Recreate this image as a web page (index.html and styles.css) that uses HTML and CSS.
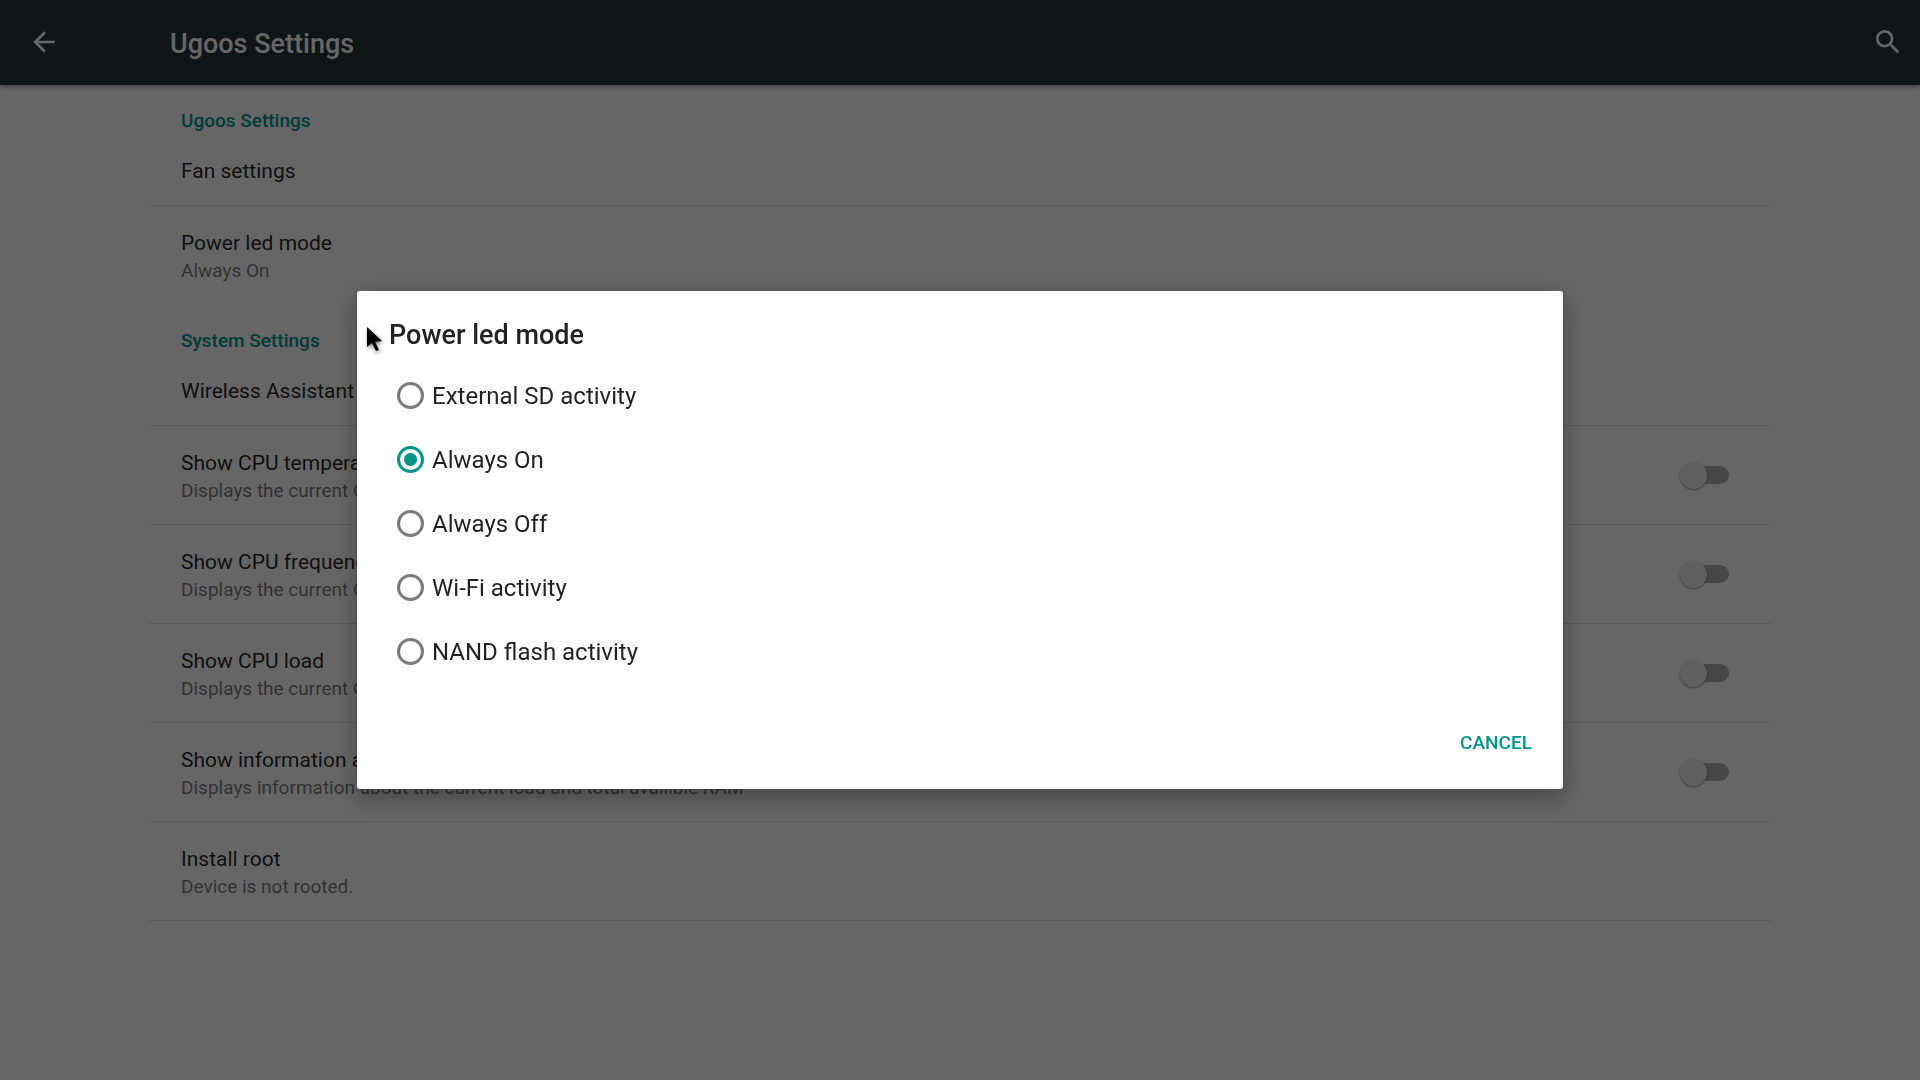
FILE: index.html
```html
<!DOCTYPE html>
<html lang="en">
<head>
  <meta charset="UTF-8" />
  <meta name="viewport" content="width=device-width, initial-scale=1" />
  <title>Ugoos Settings</title>
  <link rel="stylesheet" href="styles.css">
</head>
<body>

  <!-- Toolbar -->
  <header class="toolbar">
    <button class="icon-btn" type="button" aria-label="Back">
      <svg viewBox="0 0 24 24"><path d="M20 11H7.83l5.59-5.59L12 4l-8 8 8 8 1.41-1.41L7.83 13H20v-2z"/></svg>
    </button>
    <h1>Ugoos Settings</h1>
    <button class="icon-btn" type="button" aria-label="Search">
      <svg viewBox="0 0 24 24"><path d="M15.5 14h-.79l-.28-.27C15.41 12.59 16 11.11 16 9.5 16 5.91 13.09 3 9.5 3S3 5.91 3 9.5 5.91 16 9.5 16c1.61 0 3.09-.59 4.23-1.57l.27.28v.79l5 4.99L20.49 19l-4.99-5zm-6 0C7.01 14 5 11.99 5 9.5S7.01 5 9.5 5 14 7.01 14 9.5 11.99 14 9.5 14z"/></svg>
    </button>
  </header>

  <!-- Settings list -->
  <main class="settings">
    <h2>Ugoos Settings</h2>
    <div class="row single">
      <div class="title">Fan settings</div>
    </div>
    <div class="row last">
      <div class="text">
        <div class="title">Power led mode</div>
        <div class="summary">Always On</div>
      </div>
    </div>

    <h2>System Settings</h2>
    <div class="row single">
      <div class="title">Wireless Assistant</div>
    </div>
    <label class="row">
      <span class="text">
        <span class="title">Show CPU temperature</span>
        <span class="summary">Displays the current CPU temperature</span>
      </span>
      <input class="switch" type="checkbox" />
    </label>
    <label class="row">
      <span class="text">
        <span class="title">Show CPU frequency</span>
        <span class="summary">Displays the current CPU frequency</span>
      </span>
      <input class="switch" type="checkbox" />
    </label>
    <label class="row">
      <span class="text">
        <span class="title">Show CPU load</span>
        <span class="summary">Displays the current CPU load</span>
      </span>
      <input class="switch" type="checkbox" />
    </label>
    <label class="row">
      <span class="text">
        <span class="title">Show information about RAM</span>
        <span class="summary">Displays information about the current load and total availible RAM</span>
      </span>
      <input class="switch" type="checkbox" />
    </label>
    <div class="row">
      <div class="text">
        <div class="title">Install root</div>
        <div class="summary">Device is not rooted.</div>
      </div>
    </div>
  </main>

  <!-- Dialog -->
  <div class="overlay">
    <form class="dialog" role="dialog" aria-labelledby="dialogTitle">
      <h2 id="dialogTitle">Power led mode</h2>
      <label class="option"><input type="radio" name="led" /><span>External SD activity</span></label>
      <label class="option"><input type="radio" name="led" checked /><span>Always On</span></label>
      <label class="option"><input type="radio" name="led" /><span>Always Off</span></label>
      <label class="option"><input type="radio" name="led" /><span>Wi-Fi activity</span></label>
      <label class="option"><input type="radio" name="led" /><span>NAND flash activity</span></label>
      <div class="actions">
        <button type="button">CANCEL</button>
      </div>
      <svg class="pointer" viewBox="0 0 20 28"><path d="M1 1v20l5-4 4 8 3-1-4-8 7-1z"/></svg>
    </form>
  </div>

</body>
</html>
```

FILE: styles.css
```css
* { box-sizing: border-box; margin: 0; padding: 0; }

body {
  min-height: 100vh;
  font-family: Roboto, "Noto Sans", sans-serif;
  background: #fff;
  color: rgba(0, 0, 0, 0.87);
}

button {
  border: none;
  background: none;
  font-family: inherit;
  cursor: pointer;
}

/* TOOLBAR */
.toolbar {
  display: flex;
  align-items: center;
  height: 85px;
  padding: 0 16px 0 28px;
  background: #263238;
  box-shadow: 0 1px 5px rgba(0, 0, 0, 0.5);
}

.toolbar h1 {
  flex: 1;
  margin-left: 110px;
  padding-top: 2px;
  color: #fff;
  font-size: 27px;
  font-weight: 500;
  line-height: 32px;
}

.icon-btn {
  width: 32px;
  height: 32px;
  margin-bottom: 2px;
}

.icon-btn svg {
  display: block;
  fill: #fff;
}

/* SETTINGS LIST */
.settings {
  margin: 0 149px;
}

.settings h2 {
  height: 51px;
  padding: 24px 32px 0;
  color: #009688;
  font-size: 19px;
  font-weight: 500;
  line-height: 24px;
}

.row {
  display: flex;
  align-items: center;
  justify-content: space-between;
  height: 99px;
  padding: 0 42px 0 32px;
  border-bottom: 1px solid rgba(0, 0, 0, 0.12);
}

.single { height: 70px; }
.last { border-bottom-color: transparent; }

.text { padding-top: 4px; }

.title {
  display: block;
  font-size: 21px;
  line-height: 28px;
}

.summary {
  display: block;
  color: rgba(0, 0, 0, 0.54);
  font-size: 19px;
  line-height: 28px;
}

/* SWITCH */
.switch {
  display: flex;
  align-items: center;
  appearance: none;
  width: 49px;
  height: 27px;
}

.switch::before {
  content: "";
  width: 27px;
  height: 27px;
  border-radius: 50%;
  background: #f1f1f1;
  box-shadow: 0 1px 2px rgba(0, 0, 0, 0.4);
  z-index: 1;
}

.switch::after {
  content: "";
  width: 40px;
  height: 18px;
  margin-left: -18px;
  border-radius: 9px;
  background: #b2b2b2;
}

/* DIALOG */
.overlay {
  position: fixed;
  inset: 0;
  z-index: 10;
  display: flex;
  align-items: center;
  justify-content: center;
  background: rgba(0, 0, 0, 0.6);
}

.dialog {
  position: relative;
  width: calc(65% - 42px);
  padding: 28px 0 23px;
  border-radius: 3px;
  background: #fff;
  box-shadow: 0 8px 24px 2px rgba(0, 0, 0, 0.3);
}

.dialog h2 {
  padding: 0 32px 12px;
  font-size: 27px;
  font-weight: 500;
  line-height: 32px;
}

.option {
  display: flex;
  align-items: center;
  gap: 8px;
  height: 64px;
  padding: 0 40px;
  font-size: 24px;
}

.option span { padding-top: 2px; }

.option input {
  appearance: none;
  width: 27px;
  height: 27px;
  border: 3px solid #7b7b7b;
  border-radius: 50%;
}

.option input:checked {
  border-color: #009688;
  background: radial-gradient(circle, #009688 6px, transparent 7px);
}

.actions {
  display: flex;
  justify-content: flex-end;
  padding: 35px 20px 0;
}

.actions button {
  height: 48px;
  padding: 0 11px;
  color: #009688;
  font-size: 19px;
  font-weight: 500;
}

/* MOUSE POINTER */
.pointer {
  position: absolute;
  top: 35px;
  left: 9px;
  width: 20px;
  height: 28px;
  filter: drop-shadow(1px 2px 2px rgba(0, 0, 0, 0.5));
}
```
